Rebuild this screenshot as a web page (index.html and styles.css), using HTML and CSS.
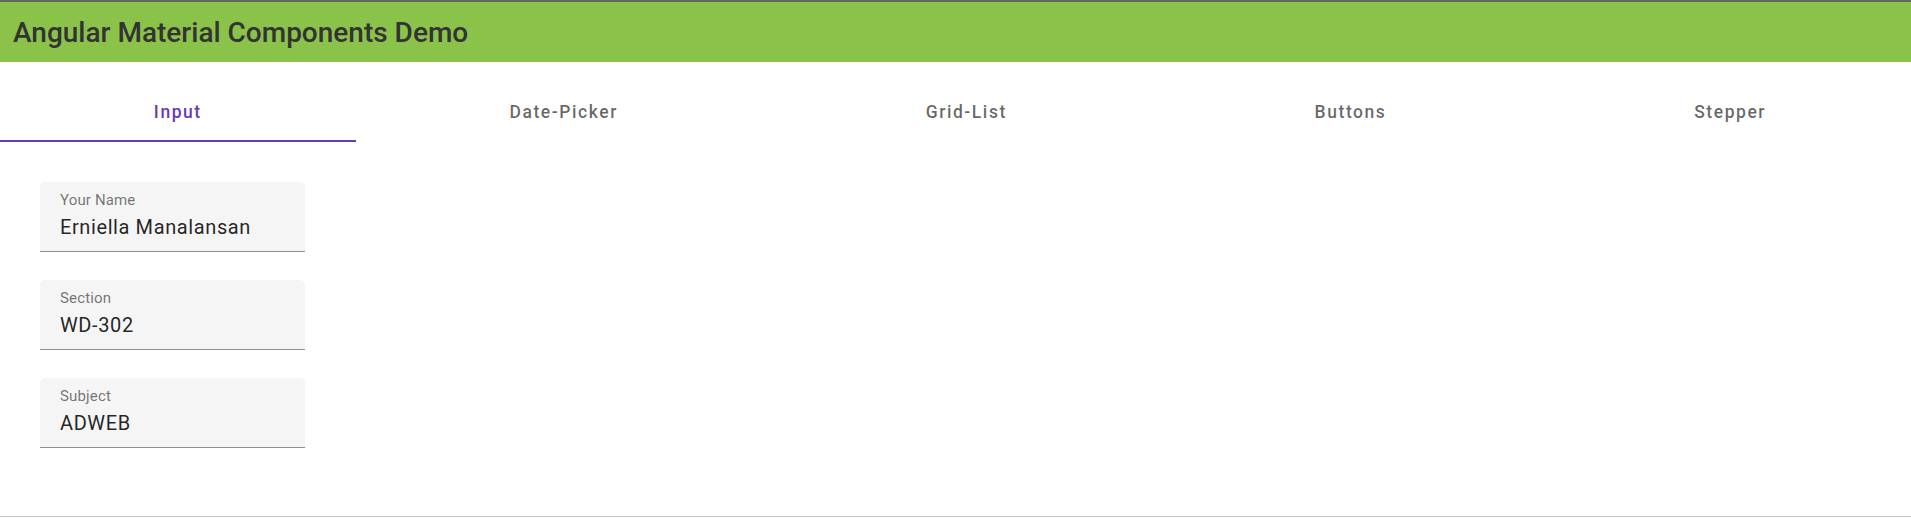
FILE: index.html
```html
<!DOCTYPE html>
<html lang="en">
<head>
<meta charset="utf-8">
<title>Angular Material Components Demo</title>
<link rel="stylesheet" href="styles.css">
</head>
<body>
<div class="page">
  <header class="toolbar">
    <h1 class="title">Angular Material Components Demo</h1>
  </header>
  <nav class="tabs">
    <div class="tab active">Input</div>
    <div class="tab">Date-Picker</div>
    <div class="tab">Grid-List</div>
    <div class="tab">Buttons</div>
    <div class="tab">Stepper</div>
  </nav>
  <main class="content">
    <div class="field">
      <label class="field-label">Your Name</label>
      <div class="field-value">Erniella Manalansan</div>
    </div>
    <div class="field">
      <label class="field-label">Section</label>
      <div class="field-value">WD-302</div>
    </div>
    <div class="field">
      <label class="field-label">Subject</label>
      <div class="field-value">ADWEB</div>
    </div>
  </main>
</div>
</body>
</html>
```
FILE: styles.css
```css
* { box-sizing: border-box; }
html, body { margin: 0; padding: 0; background: #fff; }
body { font-family: Roboto, "Noto Sans", Arial, sans-serif; overflow: hidden; }

.page {
  border-bottom: 1px solid #c6c6c6;
  overflow: hidden;
}

.toolbar {
  height: 62px;
  background: #8bc34a;
  border-top: 2px solid #5b6b57;
  display: flex;
  align-items: center;
  padding: 0 13px;
}
.title {
  margin: 0;
  font-size: 28px;
  font-weight: 500;
  color: #333;
  line-height: normal;
}

.tabs {
  margin-top: 20px;
  display: flex;
  height: 60px;
  width: calc(100% + 9px);
}
.tab {
  flex: 1 1 auto;
  min-width: 200px;
  padding: 0 30px;
  display: flex;
  align-items: center;
  justify-content: center;
  font-size: 17.5px;
  font-weight: 500;
  letter-spacing: 1.56px;
  color: rgba(0, 0, 0, 0.6);
}
.tab.active {
  color: #673ab7;
  box-shadow: inset 0 -2px 0 #673ab7;
}

.content {
  padding: 40px;
  display: flex;
  flex-direction: column;
}
.field {
  width: 265px;
  height: 70px;
  margin-bottom: 28px;
  background: #f5f5f5;
  border-radius: 5px 5px 0 0;
  border-bottom: 1px solid #8f8f8f;
  padding: 9px 20px 0;
  display: flex;
  flex-direction: column;
}
.field-label {
  font-size: 15px;
  line-height: 18px;
  letter-spacing: 0.15px;
  color: rgba(0, 0, 0, 0.55);
  margin-bottom: 3px;
}
.field-value {
  font-size: 20px;
  line-height: 30px;
  letter-spacing: 0.6px;
  color: rgba(0, 0, 0, 0.87);
}
```
